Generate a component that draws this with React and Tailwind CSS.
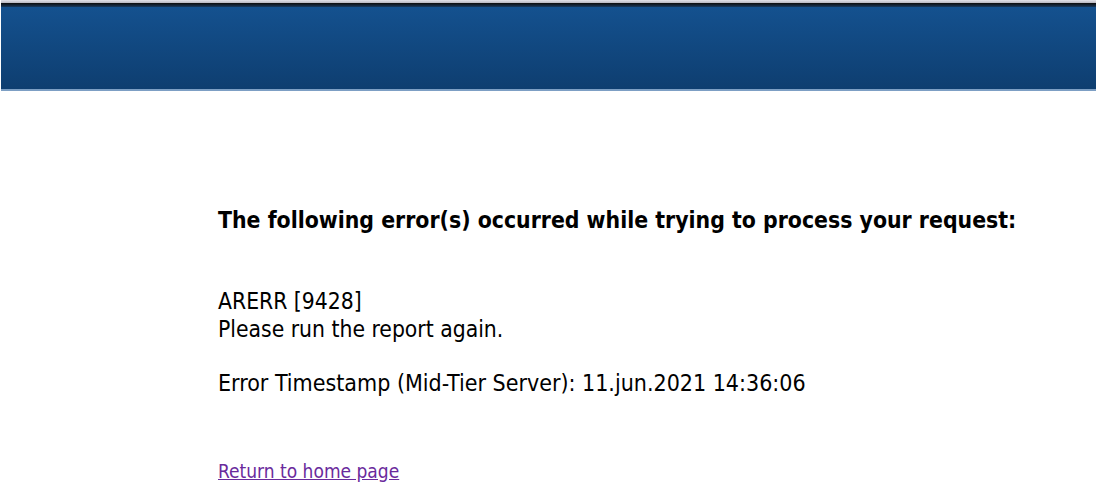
import React from "react";

const ErrorPage = () => {
  return (
    <div className="min-h-[486px] bg-white font-['DejaVu_Sans_Condensed','DejaVu_Sans',sans-serif] text-black">
      <div className="ml-px mr-[3px]">
        <div className="h-[3px] bg-gradient-to-b from-[#e4e4ea] to-[#b8b8c2]" />
        <div className="h-[4px] bg-gradient-to-b from-[#0c0c0c] to-[#173a60]" />
        <div className="h-[82px] bg-gradient-to-b from-[#14518f] to-[#0e3e70]" />
        <div className="h-[2px] bg-[#7d9fc4]" />
      </div>

      <div className="pl-[218px] pt-[115px]">
        <h2 className="text-[22.8px] font-bold leading-[28px]">
          The following error(s) occurred while trying to process your request:
        </h2>

        <div className="mt-[53px] text-[22.7px] leading-[28px]">
          <p>ARERR [9428]</p>
          <p>Please run the report again.</p>
          <p className="mt-[26px] text-[23px]">
            Error Timestamp (Mid-Tier Server): 11.jun.2021 14:36:06
          </p>
        </div>

        <a
          href="#"
          className="mt-[63px] inline-block text-[19px] leading-[22px] text-[#6a2a9c] underline"
        >
          Return to home page
        </a>
      </div>
    </div>
  );
};

export default ErrorPage;
